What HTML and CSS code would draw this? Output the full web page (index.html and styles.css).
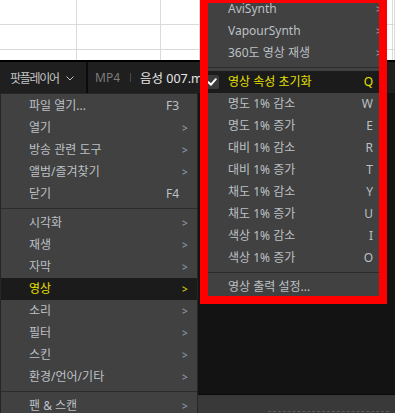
FILE: index.html
```html
<!DOCTYPE html>
<html lang="ko">
<head>
<meta charset="utf-8">
<title>팟플레이어 - 영상 메뉴</title>
<link rel="stylesheet" href="styles.css">
</head>
<body>
<div class="screen">
  <div class="sheet">
    <div class="cell"></div><div class="cell"></div><div class="cell"></div><div class="cell"></div><div class="cell"></div>
    <div class="cell"></div><div class="cell"></div><div class="cell"></div><div class="cell"></div><div class="cell"></div>
    <div class="cell last"></div><div class="cell last"></div><div class="cell last"></div><div class="cell last"></div><div class="cell last"></div>
  </div>
  <div class="sheet-edge"></div>
  <div class="titlebar">
    <div class="brand">
      <span class="brand-name">팟플레이어</span>
      <svg class="chev" width="8" height="5" viewBox="0 0 8 5"><polyline points="0.5,0.5 4,4 7.5,0.5" fill="none" stroke="#bdbdbd" stroke-width="1"/></svg>
    </div>
    <div class="fileinfo">
      <span class="fmt">MP4</span>
      <span class="vbar"></span>
      <span class="fname">음성 007.mp4</span>
    </div>
  </div>
  <div class="video"></div>
  <div class="controls"><div class="dash"></div></div>

  <div class="menu main-menu">
    <div class="item"><span class="icon"></span><span class="label">파일 열기...</span><span class="key">F3</span><span class="arrow"></span></div>
    <div class="item"><span class="icon"></span><span class="label">열기</span><span class="key"></span><span class="arrow">&gt;</span></div>
    <div class="item"><span class="icon"></span><span class="label">방송 관련 도구</span><span class="key"></span><span class="arrow">&gt;</span></div>
    <div class="item"><span class="icon"></span><span class="label">앨범/즐겨찾기</span><span class="key"></span><span class="arrow">&gt;</span></div>
    <div class="item"><span class="icon"></span><span class="label">닫기</span><span class="key">F4</span><span class="arrow"></span></div>
    <div class="sep"></div>
    <div class="item"><span class="icon"></span><span class="label">시각화</span><span class="key"></span><span class="arrow">&gt;</span></div>
    <div class="item"><span class="icon"></span><span class="label">재생</span><span class="key"></span><span class="arrow">&gt;</span></div>
    <div class="item"><span class="icon"></span><span class="label">자막</span><span class="key"></span><span class="arrow">&gt;</span></div>
    <div class="item active"><span class="icon"></span><span class="label">영상</span><span class="key"></span><span class="arrow">&gt;</span></div>
    <div class="item"><span class="icon"></span><span class="label">소리</span><span class="key"></span><span class="arrow">&gt;</span></div>
    <div class="item"><span class="icon"></span><span class="label">필터</span><span class="key"></span><span class="arrow">&gt;</span></div>
    <div class="item"><span class="icon"></span><span class="label">스킨</span><span class="key"></span><span class="arrow">&gt;</span></div>
    <div class="item"><span class="icon"></span><span class="label">환경/언어/기타</span><span class="key"></span><span class="arrow">&gt;</span></div>
    <div class="sep"></div>
    <div class="item"><span class="icon"></span><span class="label">팬 &amp; 스캔</span><span class="key"></span><span class="arrow">&gt;</span></div>
  </div>

  <div class="menu sub-menu">
    <div class="item"><span class="icon"></span><span class="label">AviSynth</span><span class="key"></span><span class="arrow">&gt;</span></div>
    <div class="item"><span class="icon"></span><span class="label">VapourSynth</span><span class="key"></span><span class="arrow">&gt;</span></div>
    <div class="item"><span class="icon"></span><span class="label">360도 영상 재생</span><span class="key"></span><span class="arrow">&gt;</span></div>
    <div class="sep"></div>
    <div class="item active"><span class="icon"><span class="check"><svg width="14" height="14" viewBox="0 0 14 14"><polyline points="3.5,7.2 6,9.7 10.8,4.2" fill="none" stroke="#ffffff" stroke-width="2" stroke-linecap="round" stroke-linejoin="round"/></svg></span></span><span class="label">영상 속성 초기화</span><span class="key">Q</span><span class="arrow"></span></div>
    <div class="item"><span class="icon"></span><span class="label">명도 1% 감소</span><span class="key">W</span><span class="arrow"></span></div>
    <div class="item"><span class="icon"></span><span class="label">명도 1% 증가</span><span class="key">E</span><span class="arrow"></span></div>
    <div class="item"><span class="icon"></span><span class="label">대비 1% 감소</span><span class="key">R</span><span class="arrow"></span></div>
    <div class="item"><span class="icon"></span><span class="label">대비 1% 증가</span><span class="key">T</span><span class="arrow"></span></div>
    <div class="item"><span class="icon"></span><span class="label">채도 1% 감소</span><span class="key">Y</span><span class="arrow"></span></div>
    <div class="item"><span class="icon"></span><span class="label">채도 1% 증가</span><span class="key">U</span><span class="arrow"></span></div>
    <div class="item"><span class="icon"></span><span class="label">색상 1% 감소</span><span class="key">I</span><span class="arrow"></span></div>
    <div class="item"><span class="icon"></span><span class="label">색상 1% 증가</span><span class="key">O</span><span class="arrow"></span></div>
    <div class="sep"></div>
    <div class="item"><span class="icon"></span><span class="label">영상 출력 설정...</span><span class="key"></span><span class="arrow"></span></div>
  </div>

  <div class="annot"></div>
</div>
</body>
</html>
```

FILE: styles.css
```css
* { box-sizing: border-box; }

html, body {
  margin: 0;
  padding: 0;
  background: #131313;
}

body {
  font-family: "Noto Sans", "Noto Sans CJK KR", sans-serif;
}

.screen {
  position: relative;
  width: 395px;
  height: 413px;
  overflow: hidden;
  display: flex;
  flex-direction: column;
  background: #131313;
}

/* spreadsheet behind the player */
.sheet {
  flex: none;
  display: grid;
  grid-template-columns: 77px 84px 39px 193px 1fr;
  grid-template-rows: 25px 25px 10px;
  background: #ffffff;
}

.cell {
  border-right: 1px solid #dadada;
  border-bottom: 1px solid #dadada;
}

.cell.last { border-bottom: none; }

.sheet-edge {
  flex: none;
  height: 2px;
  background: #000000;
}

/* player title bar */
.titlebar {
  flex: none;
  height: 31px;
  background: #1f1f1f;
  display: flex;
  align-items: center;
  white-space: nowrap;
}

.brand {
  width: 88px;
  height: 100%;
  display: flex;
  align-items: center;
  padding-left: 10px;
  border-right: 2px solid #0b0b0b;
}

.brand-name {
  font-family: "Noto Sans CJK KR", sans-serif;
  font-size: 12px;
  letter-spacing: -1.3px;
  color: #c6c6c6;
}

.chev {
  margin-left: 7px;
  margin-top: 1px;
}

.fileinfo {
  display: flex;
  align-items: center;
  padding-left: 7px;
}

.fmt {
  font-size: 12px;
  color: #7c7c7c;
}

.vbar {
  width: 1px;
  height: 9px;
  background: #4a4a4a;
  margin: 0 9px 0 10px;
}

.fname {
  font-size: 12.5px;
  color: #e6e6e6;
}

.video {
  flex: 1;
  background: #131313;
}

.controls {
  flex: none;
  height: 19px;
  border-top: 1px solid #0a0a0a;
  background: #393939;
}

.dash {
  margin: 16px 6px 0 268px;
  border-top: 1px dashed #5c5c5c;
}

/* popup menus */
.menu {
  position: absolute;
  background: #414141;
  border: 1px solid #262626;
  padding: 1px 0;
  font-size: 12px;
  color: #bcc0c5;
}

.main-menu {
  left: 0;
  top: 93px;
  width: 198px;
}

.sub-menu {
  left: 200px;
  top: -4px;
  width: 186px;
}

.item {
  display: grid;
  grid-template-columns: 28px 1fr auto 18px;
  align-items: center;
  height: 22px;
  line-height: 22px;
  white-space: nowrap;
}

.sub-menu .item {
  grid-template-columns: 27px 1fr auto 12px;
}

.icon {
  display: flex;
  align-items: center;
  height: 22px;
}

.key {
  text-align: right;
}

.arrow {
  padding-left: 3px;
  font-size: 10px;
  color: #97a3b2;
}

.sub-menu .arrow { padding-left: 3px; }

.item.active {
  background: #1b1b1b;
  color: #e6e000;
}

.item.active .arrow { color: #e6e000; }

.check {
  display: block;
  width: 14px;
  height: 14px;
  margin-left: 4px;
  border-radius: 2px;
  background: #3a3a3a;
}

.check svg { display: block; }

.sep {
  height: 1px;
  margin: 3px 0;
  background: #2c2c2c;
}

/* red annotation frame */
.annot {
  position: absolute;
  left: 200px;
  top: -5px;
  width: 187px;
  height: 309px;
  border: 8px solid #ff0000;
}
```
